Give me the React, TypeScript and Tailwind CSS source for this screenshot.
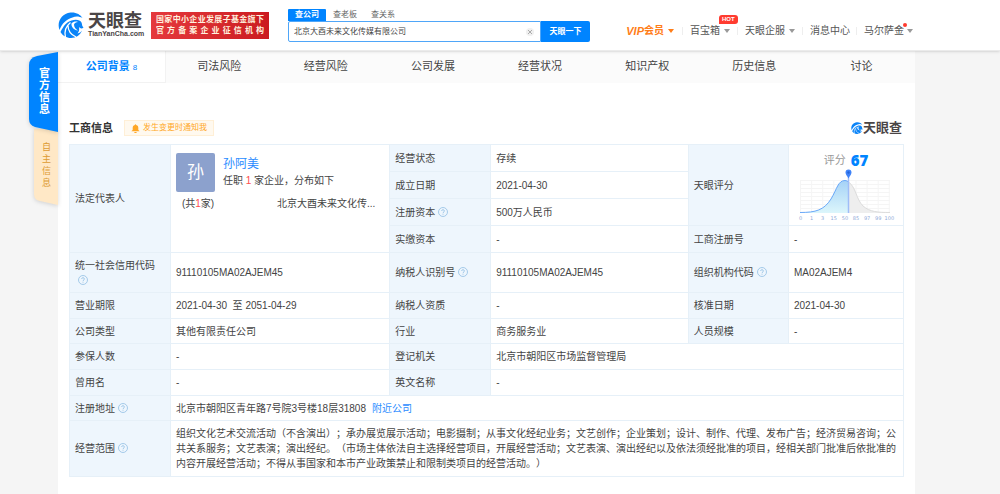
import { useState } from "react";
import type { ReactNode } from "react";

const TABS = [
  "司法风险",
  "经营风险",
  "公司发展",
  "经营状况",
  "知识产权",
  "历史信息",
  "讨论",
];

const SCOPE =
  "组织文化艺术交流活动（不含演出）；承办展览展示活动；电影摄制；从事文化经纪业务；文艺创作；企业策划；设计、制作、代理、发布广告；经济贸易咨询；公共关系服务；文艺表演；演出经纪。（市场主体依法自主选择经营项目，开展经营活动；文艺表演、演出经纪以及依法须经批准的项目，经相关部门批准后依批准的内容开展经营活动；不得从事国家和本市产业政策禁止和限制类项目的经营活动。）";

const SCALE = ["0", "1", "3", "15", "50", "85", "97", "99", "100"];

function Swirl({ className }: { className: string }) {
  return (
    <svg viewBox="0 0 52 52" className={className} aria-hidden="true">
      <path
        fill="#0a84f8"
        d="M3 36C-3 20 7 3 25 1c11-1 20 4 24 11-7-4-14-4-20-1C17 14 8 23 3 36z"
      />
      <path
        fill="#0a84f8"
        d="M5 40C11 28 17 20 27 17c8-3 17-2 20 4 2 4 0 7 4 10-3 3-7 2-9-1 1 6 0 9-3 13 4-1 7-3 9-6-3 9-12 15-22 15-9 0-17-5-21-12z"
      />
      <path fill="none" stroke="#fff" strokeWidth="2.500" d="M25 21C15 29 12 39 15 51M20 27c0 10 5 18 16 23" />
      <path fill="#fff" d="M27 23c4-4 9-5 13-3-4 0-7 2-8 5 0 5 3 9 8 12-8-1-14-7-13-14z" />
    </svg>
  );
}

function Caret({ className }: { className: string }) {
  return (
    <svg viewBox="0 0 6 4" className={`h-1 w-1.5 ${className}`} fill="currentColor" aria-hidden="true">
      <path d="M0 0h6L3 4z" />
    </svg>
  );
}

function Help() {
  return (
    <svg
      viewBox="0 0 20 20"
      className="ml-[3px] inline-block size-[10px] align-[-1px]"
      fill="none"
      stroke="#9cc5e6"
      strokeWidth="1.8"
      aria-hidden="true"
    >
      <circle cx="10" cy="10" r="9" />
      <path d="M7.2 8c0-3.6 5.6-3.6 5.6 0 0 2-2.8 2-2.8 4.2M10 13.6v1.8" />
    </svg>
  );
}

function Label({ children, rows }: { children: ReactNode; rows?: number }) {
  return (
    <th
      scope="row"
      rowSpan={rows}
      className="border border-[#e6f0f8] bg-[#eef6fd] px-[5px] text-left font-normal"
    >
      {children}
    </th>
  );
}

function Value({ children, cols }: { children?: ReactNode; cols?: number }) {
  return (
    <td colSpan={cols} className="border border-[#e6f0f8] px-[5px]">
      {children}
    </td>
  );
}

function ScoreChart() {
  return (
    <svg viewBox="0 0 100 54" className="mx-auto block h-[54px] w-[100px]" aria-hidden="true">
      <defs>
        <linearGradient id="scoreFill" x1="0" y1="0" x2="0" y2="1">
          <stop offset="0" stopColor="#a5d2f7" />
          <stop offset="1" stopColor="#dcf6fb" />
        </linearGradient>
      </defs>
      <g stroke="#f5f5f5" strokeWidth="1">
        {[12, 16, 20, 24, 28, 32, 36, 40, 44].map((y) => (
          <path key={y} d={`M4 ${y}.5h90`} />
        ))}
        {SCALE.map((label, i) => (
          <path key={label} d={`M${4.5 + i * 11.1} 12v33`} />
        ))}
      </g>
      <path
        fill="url(#scoreFill)"
        d="M4 44.500C20 44.500 28 42 35 31C41 21 42 12.500 49 12.500Q51 12.500 52.500 14V45H4z"
      />
      <path
        fill="#eeeeee"
        d="M52.500 14C60 19 60 31 67 38C74 44 82 44.500 94 44.500V45H52z"
      />
      <path
        fill="none"
        stroke="#69a8f8"
        d="M4 44.500C20 44.500 28 42 35 31C41 21 42 12.500 49 12.500Q51 12.500 52.500 14"
      />
      <path fill="none" stroke="#dcdcdc" d="M52.500 14C60 19 60 31 67 38C74 44 82 44.500 94 44.500" />
      <path stroke="#9fbdf8" strokeWidth="1.500" d="M52.500 8v37" />
      <path fill="#3f83f8" d="M52.500 10.500C51 7.500 49.500 6.500 49.500 4.500a3 3 0 0 1 6 0c0 2-1.500 3-3 6z" />
      <circle cx="52.500" cy="4.500" r="1.200" fill="#2463d8" />
      <g fill="#8fa9d8" fontSize="5" textAnchor="middle" fontFamily="DejaVu Sans">
        {SCALE.map((label, i) => (
          <text key={label} x={4.5 + i * 11.1} y="52">
            {label}
          </text>
        ))}
      </g>
    </svg>
  );
}

function Header() {
  const [keyword, setKeyword] = useState("北京大酉未来文化传媒有限公司");

  return (
    <header className="relative z-10 flex h-[51px] items-start border-b border-[#ebebeb] bg-white pl-[58px] pr-[87px] shadow-sm">
      <a href="#" className="mt-3 flex shrink-0 items-start">
        <Swirl className="size-[26px]" />
        <span className="ml-1 block w-[54px] text-[#4a4546]">
          <span className="block text-[18px] font-bold leading-[18px]">天眼查</span>
          <span className="block text-[7px] font-bold leading-[8px]">TianYanCha.com</span>
        </span>
      </a>

      <div className="ml-[9px] mt-3 h-[27px] w-[118px] shrink-0 bg-linear-to-r from-[#e5393d] to-[#cb1a1f] px-[5px] py-[2px] text-[8px] font-bold leading-[11px] text-[#fff1df]">
        <p className="flex justify-between">
          {"国家中小企业发展子基金旗下".split("").map((c, i) => (
            <span key={i}>{c}</span>
          ))}
        </p>
        <p className="flex justify-between">
          {"官方备案企业征信机构".split("").map((c, i) => (
            <span key={i}>{c}</span>
          ))}
        </p>
      </div>

      <div className="ml-[19px] mt-[9px] w-[302px] shrink-0 text-[8px]">
        <div className="flex h-3 leading-3 text-[#666]">
          <button className="w-[38px] rounded-t-[1px] bg-[#0084ff] font-bold text-white">查公司</button>
          <button className="w-[38px]">查老板</button>
          <button className="w-[38px]">查关系</button>
        </div>
        <form className="flex h-[21px]" onSubmit={(e) => e.preventDefault()}>
          <div className="flex flex-1 items-center rounded-l-[2px] border border-[#4fa6f8] pl-[5px] pr-[6px]">
            <input
              aria-label="公司名称"
              className="min-w-0 flex-1 text-[#444] outline-none"
              value={keyword}
              onChange={(e) => setKeyword(e.target.value)}
            />
            <button
              type="button"
              aria-label="清除"
              onClick={() => setKeyword("")}
              className="flex size-2 items-center justify-center rounded-full bg-[#f0f0f0]"
            >
              <svg viewBox="0 0 8 8" className="size-2" stroke="#999" strokeWidth="0.8">
                <path d="M2 2l4 4M6 2L2 6" />
              </svg>
            </button>
          </div>
          <button className="w-[49px] rounded-r-[2px] bg-[#0084ff] font-bold text-white">天眼一下</button>
        </form>
      </div>

      <nav className="ml-auto mt-[25px] flex items-center text-[10px] leading-3 text-[#555]">
        <a href="#" className="flex items-center whitespace-nowrap font-bold text-[#ff7d18]">
          <i className="text-[11px]">VIP</i>会员
          <Caret className="ml-1" />
        </a>
        <span className="ml-2 h-2 w-px bg-[#eee]" />
        <a href="#" className="relative ml-[7px] flex items-center whitespace-nowrap">
          百宝箱
          <Caret className="ml-1 text-[#999]" />
          <span className="absolute -top-[10px] left-[29px] rounded-[3px] rounded-bl-none bg-[#ff3b30] px-[3px] text-[6px] font-bold leading-[9px] text-white">
            HOT
          </span>
        </a>
        <span className="ml-[7px] h-2 w-px bg-[#eee]" />
        <a href="#" className="ml-[7px] flex items-center whitespace-nowrap">
          天眼企服
          <Caret className="ml-1 text-[#999]" />
        </a>
        <span className="ml-[7px] h-2 w-px bg-[#eee]" />
        <a href="#" className="ml-[7px] whitespace-nowrap">消息中心</a>
        <span className="ml-[6px] h-2 w-px bg-[#eee]" />
        <a href="#" className="relative ml-[7px] flex items-center whitespace-nowrap">
          马尔萨金
          <Caret className="ml-[3px] text-[#999]" />
          <span className="absolute -top-[2px] right-[6px] size-1 rounded-full bg-[#ff3b30]" />
        </a>
      </nav>
    </header>
  );
}

function SideTabs() {
  return (
    <aside className="absolute -left-[29px] top-0 w-[29px]">
      <svg viewBox="0 0 29 156" className="absolute left-0 top-0 h-[156px] w-[29px] overflow-visible" aria-hidden="true">
        <path
          fill="#ffe8c6"
          className="drop-shadow-sm"
          d="M5 78h24v76l-18-4q-6-1-6-7z"
        />
        <path fill="#0084ff" className="drop-shadow-sm" d="M29 1L8 5Q0 7 0 14v54q0 6 6 8l23 5z" />
      </svg>
      <a
        href="#"
        className="relative block w-[31px] pt-[16px] text-center text-[11px] font-bold leading-[12px] text-white"
      >
        官<br />方<br />信<br />息
      </a>
      <a
        href="#"
        className="relative block w-[35px] pt-[26px] text-center text-[9px] leading-[12px] text-[#dd9a32]"
      >
        自<br />主<br />信<br />息
      </a>
    </aside>
  );
}

export default function App() {
  return (
    <div className="min-h-screen bg-[#f5f5f5] font-['Liberation_Sans','Noto_Sans_CJK_SC',sans-serif] text-[#444]">
      <Header />

      <main className="relative ml-[58px] mr-[85px] min-h-[443px] bg-white">
        <SideTabs />

        {/* Section tabs */}
        <nav className="grid h-8 grid-cols-8 border-b border-[#f2f2f2] text-center text-[11px] leading-[30px]">
          <a href="#" className="font-bold text-[#0084ff]">
            公司背景 <span className="text-[8px] font-normal">8</span>
          </a>
          {TABS.map((tab, i) => (
            <a
              key={tab}
              href="#"
              className={i === 0 ? "border-l border-[#f2f2f2] bg-[#fbfbfb]" : "bg-[#fbfbfb]"}
            >
              {tab}
            </a>
          ))}
        </nav>

        <section className="px-[11px] pt-[37px]">
          <div className="mb-2 flex h-4 items-center">
            <h2 className="text-[11px] font-bold text-[#333]">工商信息</h2>
            <button className="ml-[11px] flex h-4 w-[90px] items-center justify-center whitespace-nowrap border border-[#ffefd6] bg-[#fff9ef] text-[8px] text-[#ffa726]">
              <svg viewBox="0 0 16 16" className="mr-[3px] size-[9px]" fill="currentColor" aria-hidden="true">
                <path d="M8 0.500c.7 0 1.200.5 1.200 1.200C12 2.300 13 4.500 13 7v3.500l2 1.800v.7H1v-.7l2-1.800V7c0-2.500 1-4.700 3.800-5.300C6.800 1 7.300.5 8 .5zM5.500 14h5c-.3 1.200-1.200 2-2.500 2s-2.200-.8-2.500-2z" />
              </svg>
              发生变更时通知我
            </button>
            <span className="ml-auto mr-[2px] flex items-center text-[13px] font-bold leading-4 text-[#4a4546]">
              <Swirl className="size-3" />
              天眼查
            </span>
          </div>

          <table className="w-full table-fixed border-collapse text-[10px] leading-[15px]">
            <colgroup>
              <col className="w-[12.1%]" />
              <col className="w-[26.3%]" />
              <col className="w-[12.1%]" />
              <col className="w-[23.7%]" />
              <col className="w-[12%]" />
              <col />
            </colgroup>
            <tbody>
              <tr className="h-[27px]">
                <Label rows={4}>法定代表人</Label>
                <td rowSpan={4} className="border border-[#e6f0f8] px-[5px] pt-2 align-top">
                  <div className="flex">
                    <span className="flex h-[39px] w-[39px] items-center justify-center rounded-[2px] bg-[#8ca1cd] text-[17px] text-white">
                      孙
                    </span>
                    <div className="ml-2 pt-1">
                      <a href="#" className="block text-[12px] text-[#2a8cff]">孙阿美</a>
                      <p className="leading-[18px]">
                        任职 <span className="text-[#ff4d4f]">1</span> 家企业，分布如下
                      </p>
                    </div>
                  </div>
                  <div className="mt-1 flex justify-between pl-[6px] pr-[9px]">
                    <span>
                      (共<span className="text-[#ff4d4f]">1</span>家)
                    </span>
                    <a href="#" className="whitespace-nowrap">北京大酉未来文化传...</a>
                  </div>
                </td>
                <Label>经营状态</Label>
                <Value>存续</Value>
                <Label rows={3}>天眼评分</Label>
                <td rowSpan={3} className="border border-[#e6f0f8] p-0">
                  <p className="flex items-center justify-center pt-[3px] text-[11px] leading-4 text-[#999]">
                    评分
                    <b className="ml-[5px] font-['Open_Sans'] text-[15px] font-extrabold text-[#0084ff]">67</b>
                  </p>
                  <ScoreChart />
                </td>
              </tr>
              <tr className="h-[27px]">
                <Label>成立日期</Label>
                <Value>2021-04-30</Value>
              </tr>
              <tr className="h-[27px]">
                <Label>注册资本<Help /></Label>
                <Value>500万人民币</Value>
              </tr>
              <tr className="h-[27px]">
                <Label>实缴资本</Label>
                <Value>-</Value>
                <Label>工商注册号</Label>
                <Value>-</Value>
              </tr>
              <tr className="h-10">
                <Label>
                  统一社会信用代码
                  <br />
                  <Help />
                </Label>
                <Value>91110105MA02AJEM45</Value>
                <Label>纳税人识别号<Help /></Label>
                <Value>91110105MA02AJEM45</Value>
                <Label>组织机构代码<Help /></Label>
                <Value>MA02AJEM4</Value>
              </tr>
              <tr className="h-[26px]">
                <Label>营业期限</Label>
                <Value>2021-04-30&nbsp; 至 2051-04-29</Value>
                <Label>纳税人资质</Label>
                <Value>-</Value>
                <Label>核准日期</Label>
                <Value>2021-04-30</Value>
              </tr>
              <tr className="h-[25px]">
                <Label>公司类型</Label>
                <Value>其他有限责任公司</Value>
                <Label>行业</Label>
                <Value>商务服务业</Value>
                <Label>人员规模</Label>
                <Value>-</Value>
              </tr>
              <tr className="h-[26px]">
                <Label>参保人数</Label>
                <Value>-</Value>
                <Label>登记机关</Label>
                <Value cols={3}>北京市朝阳区市场监督管理局</Value>
              </tr>
              <tr className="h-[26px]">
                <Label>曾用名</Label>
                <Value>-</Value>
                <Label>英文名称</Label>
                <Value cols={3}>-</Value>
              </tr>
              <tr className="h-[25px]">
                <Label>注册地址<Help /></Label>
                <Value cols={5}>
                  北京市朝阳区青年路7号院3号楼18层31808
                  <a href="#" className="ml-[6px] text-[#2a8cff]">附近公司</a>
                </Value>
              </tr>
              <tr className="h-14">
                <Label>经营范围<Help /></Label>
                <Value cols={5}>
                  <p className="[text-spacing-trim:space-all]">{SCOPE}</p>
                </Value>
              </tr>
            </tbody>
          </table>
        </section>
      </main>
    </div>
  );
}
